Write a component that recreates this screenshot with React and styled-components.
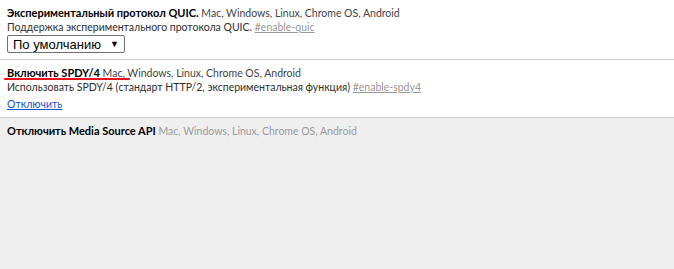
import React from "react";
import styled, { createGlobalStyle } from "styled-components";

const Global = createGlobalStyle`
	html, body {
		margin: 0;
		background: #fff;
	}
	body {
		font-family: Lato, "Open Sans", sans-serif;
		font-size: 10.5px;
		color: #303030;
	}
`

const experiments = [
	{
		title: "Экспериментальный протокол QUIC.",
		platforms: "Mac, Windows, Linux, Chrome OS, Android",
		desc: "Поддержка экспериментального протокола QUIC.",
		hash: "#enable-quic",
		control: "select",
	},
	{
		title: "Включить SPDY/4",
		platforms: "Mac, Windows, Linux, Chrome OS, Android",
		desc: "Использовать SPDY/4 (стандарт HTTP/2, экспериментальная функция)",
		hash: "#enable-spdy4",
		control: "link",
		marked: true,
	},
	{
		title: "Отключить Media Source API",
		platforms: "Mac, Windows, Linux, Chrome OS, Android",
		unsupported: true,
	},
];

const App = () => {
	return (
		<Page>
			<Global />
			{experiments.map((ex) => (
				<Row key={ex.title} $unsupported={ex.unsupported}>
					<Line>
						<Title $marked={ex.marked}>{ex.title}</Title>{" "}
						<Platforms $dim={ex.unsupported}>{ex.platforms}</Platforms>
					</Line>
					{ex.desc && (
						<Line>
							{ex.desc} <Hash href={ex.hash}>{ex.hash}</Hash>
						</Line>
					)}
					{ex.control === "select" && (
						<Select>
							<span>По умолчанию</span>
							<Arrow>▼</Arrow>
						</Select>
					)}
					{ex.control === "link" && (
						<ActionLine>
							<Action href="#">Отключить</Action>
						</ActionLine>
					)}
				</Row>
			))}
		</Page>
	);
}

const Page = styled.div`
	min-height: 269px;
	background: #efefef;
`
const Row = styled.div`
	padding: 5px 0 6px 7px;
	background: ${(p) => (p.$unsupported ? "#efefef" : "#fff")};
	border-bottom: ${(p) => (p.$unsupported ? "none" : "1px solid #cfcfcf")};
`
const Line = styled.div`
	height: 15px;
	line-height: 15px;
	white-space: nowrap;
`
const ActionLine = styled(Line)`
	margin: 2px 0 -1px;
`
const Title = styled.span`
	position: relative;
	font-size: 11px;
	font-weight: 700;
	color: #000;
	&::after {
		content: "";
		display: ${(p) => (p.$marked ? "block" : "none")};
		position: absolute;
		left: -3px;
		width: 126px;
		bottom: -1px;
		height: 2px;
		border-radius: 1px;
		background: #e8101a;
	}
`
const Platforms = styled.span`
	color: ${(p) => (p.$dim ? "#9a9a9a" : "#444")};
`
const Hash = styled.a`
	color: #9a9a9a;
	text-decoration: underline;
`
const Action = styled.a`
	color: #1155cc;
	text-decoration: underline;
`
const Select = styled.div`
	display: flex;
	align-items: center;
	justify-content: space-between;
	box-sizing: border-box;
	width: 118px;
	height: 18px;
	padding: 0 5px 0 5px;
	border: 1px solid #707070;
	border-radius: 2px;
	font-family: "Liberation Sans", Arial, sans-serif;
	font-size: 13px;
	color: #000;
	background: #fff;
`
const Arrow = styled.span`
	font-size: 9px;
`

export default App;
